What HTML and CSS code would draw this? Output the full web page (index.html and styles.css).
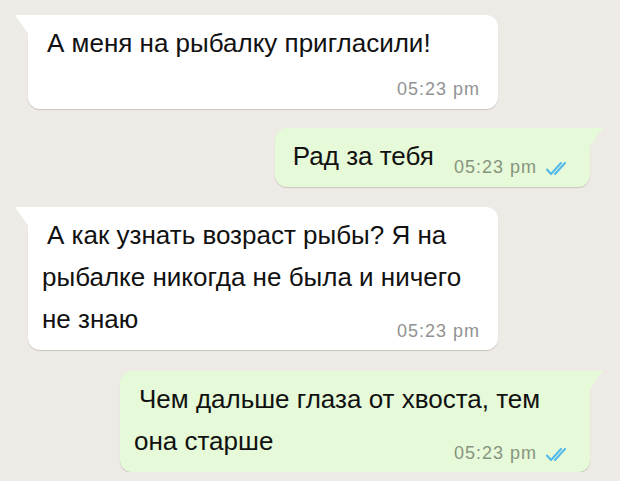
FILE: index.html
```html
<!DOCTYPE html>
<html lang="ru">
<head>
    <meta charset="UTF-8">
    <meta name="viewport" content="width=device-width, initial-scale=1.0">
    <title>Чат</title>
    <link rel="stylesheet" href="styles.css">
</head>
<body>

    <div class="chat">

        <div class="bubble in wide">
            <p class="text">А меня на рыбалку пригласили!</p>
            <div class="meta below"><span class="time">05:23 pm</span></div>
        </div>

        <div class="bubble out row">
            <p class="text">Рад за тебя</p>
            <div class="meta">
                <span class="time">05:23 pm</span>
                <svg class="ticks" width="26" height="13" viewBox="0 0 26 13">
                    <path d="M1 7.5 L5 12 L15 1" />
                    <path d="M9 12 L19 1" />
                </svg>
            </div>
        </div>

        <div class="bubble in wide">
            <p class="text">А как узнать возраст рыбы? Я на рыбалке никогда не была и ничего<br>не знаю<span class="meta tail"><span class="time">05:23 pm</span></span></p>
        </div>

        <div class="bubble out wide">
            <p class="text">Чем дальше глаза от хвоста, тем<br>она старше<span class="meta tail"><span class="time">05:23 pm</span><svg class="ticks" width="26" height="13" viewBox="0 0 26 13"><path d="M1 7.5 L5 12 L15 1" /><path d="M9 12 L19 1" /></svg></span></p>
        </div>

    </div>

</body>
</html>
```

FILE: styles.css
```css
body {
    margin: 0;
    background-color: #eeeae6;
    font-family: "Liberation Sans", Arial, sans-serif;
}
.chat {
    display: flex;
    flex-direction: column;
    padding: 15px 30px 0 28px;
}
.bubble {
    position: relative;
    padding: 7px 18px 10px 14px;
    border-radius: 12px;
    box-shadow: 0 1px 1px rgba(0, 0, 0, 0.16);
    box-sizing: border-box;
}
.bubble::before {
    content: "";
    position: absolute;
    top: 0;
    width: 14px;
    height: 20px;
}
.in {
    align-self: flex-start;
    background-color: #ffffff;
    border-top-left-radius: 0;
}
.in::before {
    left: -13px;
    background-color: #ffffff;
    clip-path: polygon(0 0, 100% 0, 100% 100%);
}
.out {
    align-self: flex-end;
    background-color: #e6f9d8;
    border-top-right-radius: 0;
}
.out::before {
    right: -13px;
    background-color: #e6f9d8;
    clip-path: polygon(0 0, 100% 0, 0 100%);
}
.bubble + .bubble {
    margin-top: 19px;
}
.bubble:nth-child(3) {
    margin-top: 20px;
}
.bubble:nth-child(4) {
    margin-top: 21px;
}
.wide {
    width: 470px;
}
.text {
    display: flow-root;
    margin: 0;
    font-size: 26px;
    line-height: 42px;
    color: #111;
    text-indent: 5px;
}
.meta {
    display: flex;
    justify-content: flex-end;
    align-items: center;
    gap: 9px;
    height: 20px;
    text-indent: 0;
}
.meta.below {
    margin-top: 15px;
}
.meta.tail {
    float: right;
    margin: 23px 0 -4px 16px;
}
.time {
    font-size: 18px;
    line-height: 20px;
    letter-spacing: 1px;
    color: #929292;
}
.out .time {
    color: #86957f;
}
.row {
    display: flex;
    align-items: flex-end;
    gap: 20px;
    padding-left: 13px;
}
.ticks {
    fill: none;
    stroke: #52b9ea;
    stroke-width: 2;
    stroke-linecap: round;
    stroke-linejoin: round;
    margin-top: 2px;
}
```
